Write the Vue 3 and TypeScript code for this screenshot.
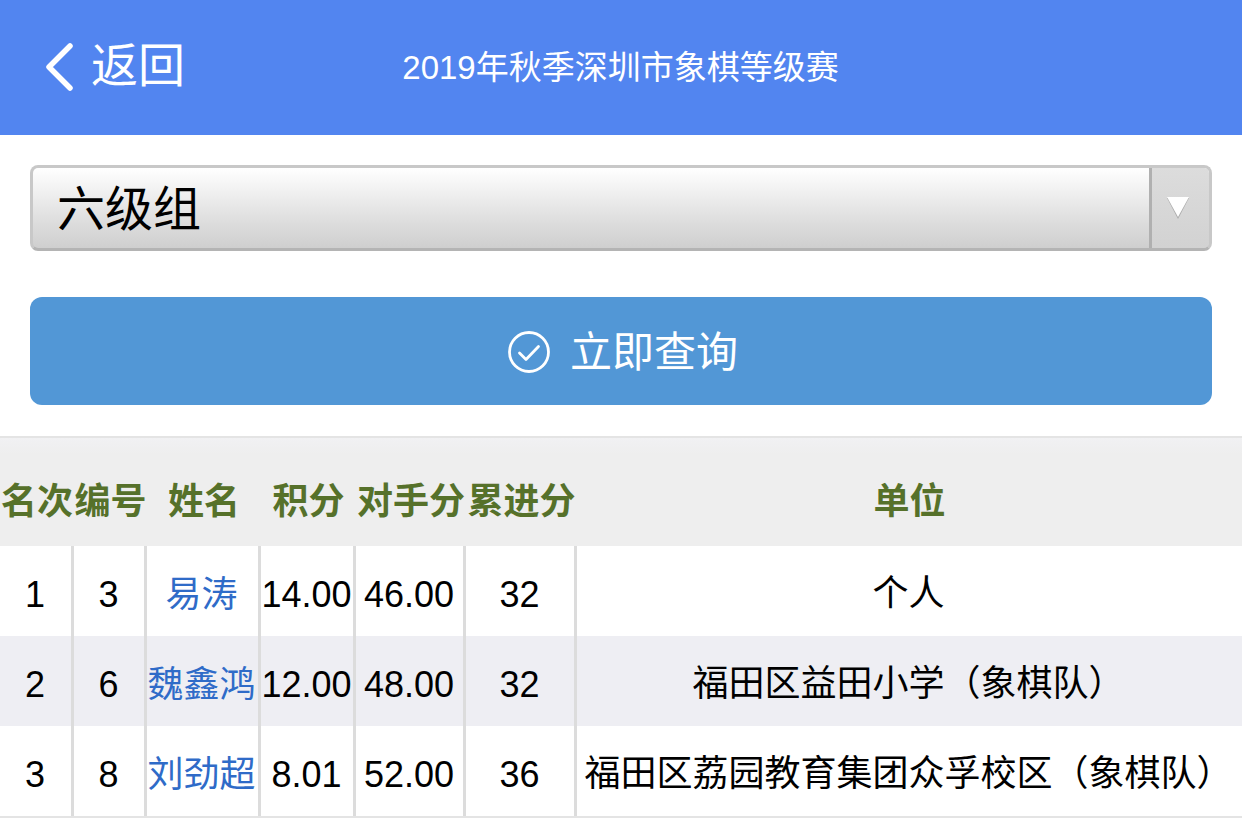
<script setup lang="ts">
interface Row { rank: string; no: string; name: string; score: string; opp: string; acc: string; unit: string }
const rows: Row[] = [
  { rank: '1', no: '3', name: '易涛', score: '14.00', opp: '46.00', acc: '32', unit: '个人' },
  { rank: '2', no: '6', name: '魏鑫鸿', score: '12.00', opp: '48.00', acc: '32', unit: '福田区益田小学（象棋队）' },
  { rank: '3', no: '8', name: '刘劲超', score: '8.01', opp: '52.00', acc: '36', unit: '福田区荔园教育集团众孚校区（象棋队）' },
]
const heads = ['名次', '编号', '姓名', '积分', '对手分', '累进分', '单位']
</script>

<template>
  <div class="page">
    <header class="bar">
      <div class="back">
        <svg class="chev" width="30" height="50" viewBox="0 0 30 50">
          <path d="M26 4 L5 25 L26 46" fill="none" stroke="#fff" stroke-width="5.5" stroke-linecap="round" stroke-linejoin="round" />
        </svg>
        <span class="back-text">返回</span>
      </div>
      <div class="title">2019年秋季深圳市象棋等级赛</div>
    </header>
    <section class="form">
      <div class="select">
        <span class="val">六级组</span>
        <span class="arrow">
          <svg width="22" height="22" viewBox="0 0 22 22">
            <path d="M0 1 H22 L11 22 Z" fill="#aaa" />
            <path d="M0 0 H22 L11 20 Z" fill="#fff" />
          </svg>
        </span>
      </div>
      <button class="query" type="button">
        <svg class="check" width="42" height="42" viewBox="0 0 42 42">
          <circle cx="21" cy="21" r="19.5" fill="none" stroke="#fff" stroke-width="2.8" />
          <path d="M11.5 22 L18 28.5 L30.5 15.5" fill="none" stroke="#fff" stroke-width="2.8" stroke-linecap="round" stroke-linejoin="round" />
        </svg>
        <span class="query-text">立即查询</span>
      </button>
    </section>
    <section class="table">
      <div class="row head">
        <div v-for="h in heads" :key="h" class="cell">{{ h }}</div>
      </div>
      <div v-for="(r, i) in rows" :key="r.rank" class="row body" :class="{ alt: i % 2 === 1 }">
        <div class="cell num">{{ r.rank }}</div>
        <div class="cell num">{{ r.no }}</div>
        <div class="cell name">{{ r.name }}</div>
        <div class="cell num">{{ r.score }}</div>
        <div class="cell num">{{ r.opp }}</div>
        <div class="cell num">{{ r.acc }}</div>
        <div class="cell text">{{ r.unit }}</div>
      </div>
    </section>
  </div>
</template>

<style scoped>
.page {
  width: 1242px;
  height: 818px;
  overflow: hidden;
  background: #fff;
  font-family: "Liberation Sans", "Noto Sans CJK SC", sans-serif;
  color: #000;
}
.bar {
  height: 135px;
  background: #5285f0;
  color: #fff;
  position: relative;
  display: flex;
  align-items: center;
  justify-content: center;
}
.back {
  position: absolute;
  left: 44px;
  top: 42px;
  display: flex;
  align-items: center;
  gap: 17px;
  font-size: 47px;
  line-height: 50px;
}
.back-text { margin-top: -2px; }
.chev { display: block; }
.title {
  font-size: 33px;
  line-height: 40px;
  margin-left: -1px;
}
.form {
  padding: 30px 30px 31px;
  display: flex;
  flex-direction: column;
  gap: 46px;
}
.select {
  height: 86px;
  box-sizing: border-box;
  border: 3px solid #c8c8c8;
  border-bottom-color: #b4b4b4;
  border-radius: 8px;
  background: linear-gradient(#fff, #f0f0f0 30%, #dcdcdc 70%, #cfcfcf);
  display: flex;
  align-items: center;
  justify-content: space-between;
  padding-left: 25px;
  overflow: hidden;
}
.val {
  font-size: 48px;
  line-height: 60px;
  margin-top: 3px;
  margin-left: -1px;
}
.arrow {
  width: 60px;
  height: 100%;
  box-sizing: border-box;
  border-left: 3px solid #b0b0b0;
  padding-right: 6px;
  background: linear-gradient(#dcdcdc, #d2d2d2);
  display: flex;
  align-items: center;
  justify-content: center;
}
.query {
  height: 108px;
  border: 0;
  padding: 0;
  border-radius: 12px;
  background: #5297d6;
  color: #fff;
  font: inherit;
  font-size: 42px;
  display: flex;
  align-items: center;
  justify-content: center;
  gap: 22px;
}
.query-text { margin-top: -5px; margin-left: -2px; }
.check { margin-left: 4px; margin-top: 1px; }
.table {
  border-top: 2px solid #e4e4e4;
}
.row {
  display: grid;
  grid-template-columns: 74px 73px 114px 95px 110px 111px 665px;
}
.head {
  height: 108px;
  background: linear-gradient(#f1f1f3, #eeeeee 15%);
  color: #56712a;
  font-weight: 700;
  font-size: 36px;
}
.head .cell {
  display: flex;
  align-items: center;
  justify-content: center;
  white-space: nowrap;
  padding-top: 12px;
}
.body {
  height: 90px;
  font-size: 36px;
  box-sizing: border-box;
}
.body:last-child {
  height: 92px;
  border-bottom: 2px solid #e4e4e4;
}
.alt { background: #eeeef3; }
.body .cell {
  display: flex;
  align-items: center;
  justify-content: center;
  white-space: nowrap;
  box-sizing: border-box;
  padding-right: 1px;
  border-right: 3px solid #dcdcdc;
}
.body .cell.num { padding-top: 7px; }
.body .cell.name { padding-right: 2px; padding-bottom: 1px; }
.body .cell.text {
  border-right: 0;
  padding-right: 2px;
  padding-bottom: 2px;
}
.name { color: #2f6bc8; }
</style>
